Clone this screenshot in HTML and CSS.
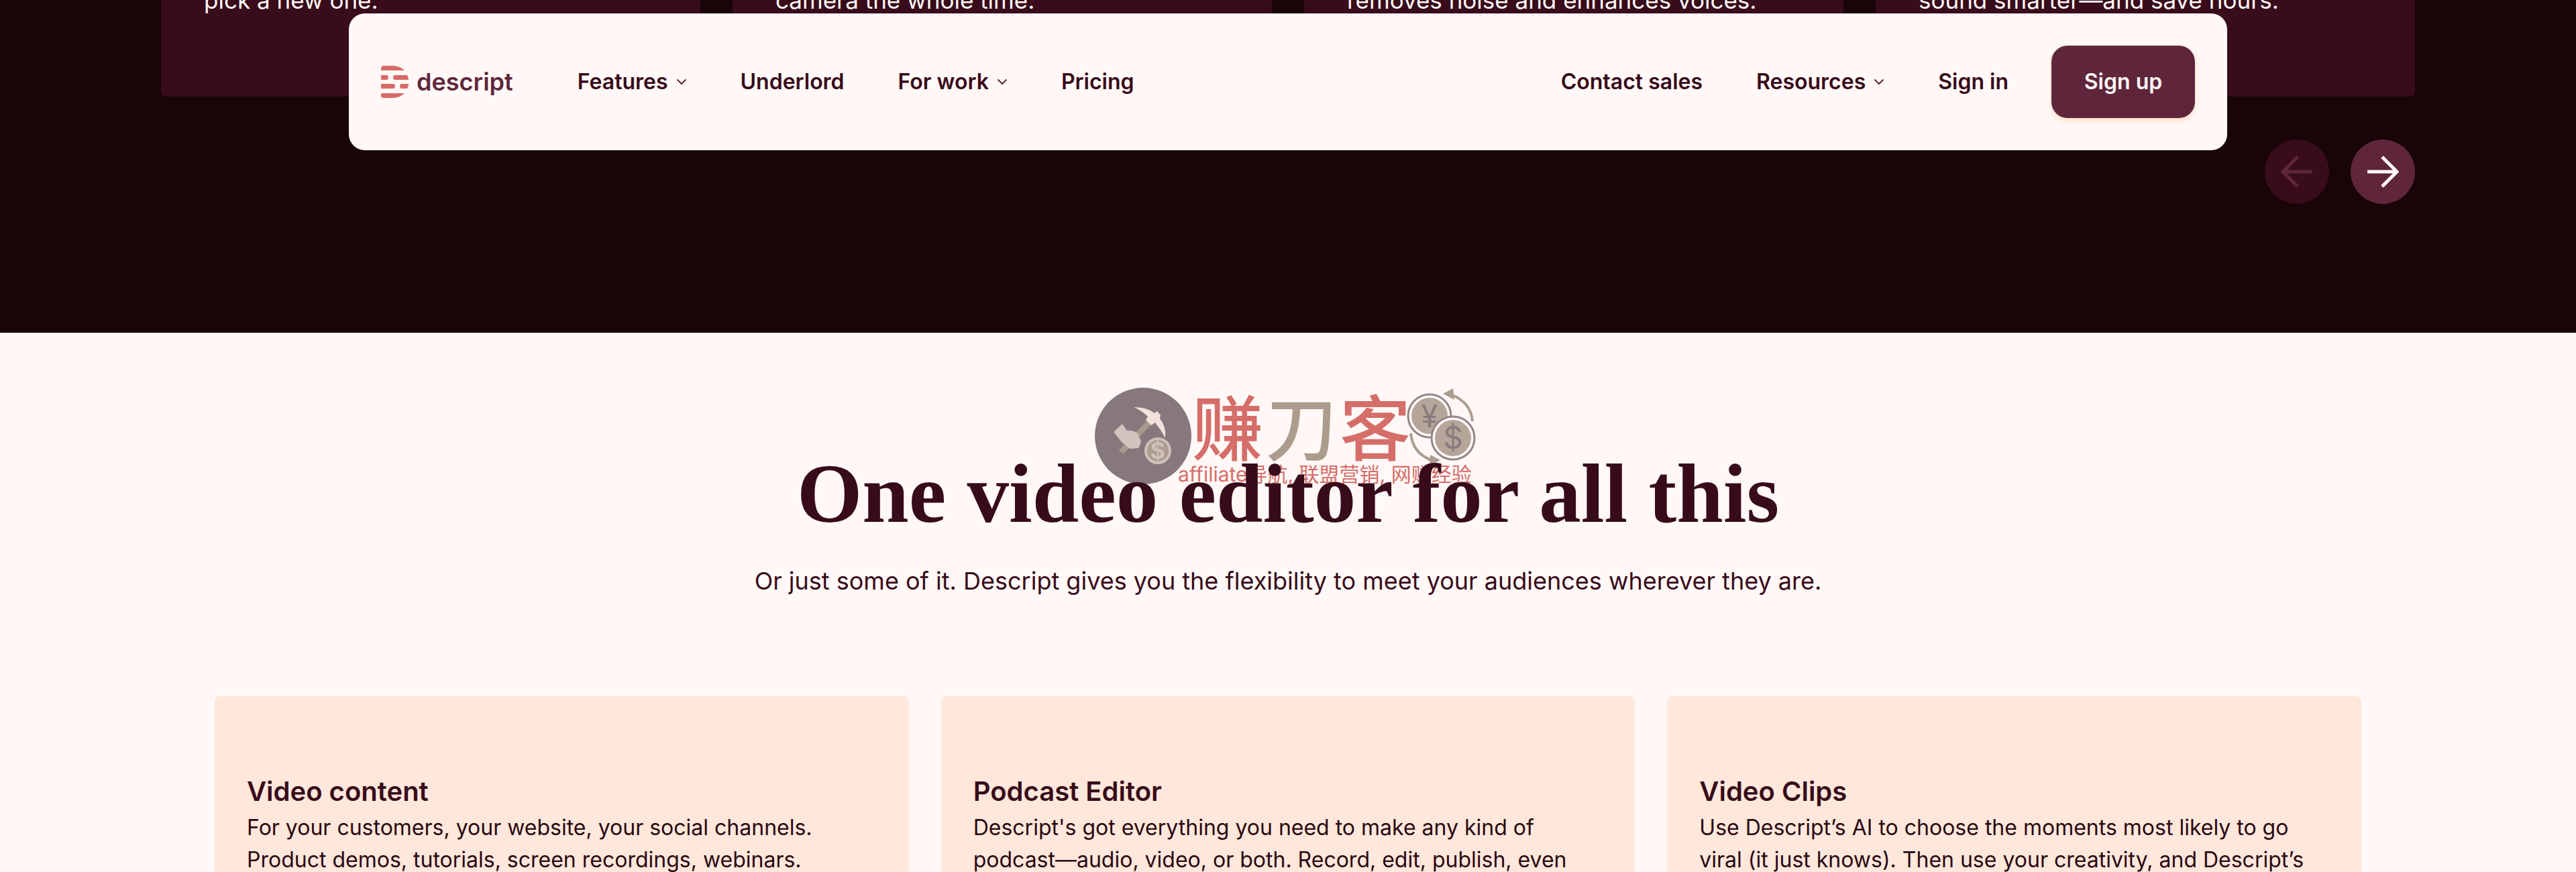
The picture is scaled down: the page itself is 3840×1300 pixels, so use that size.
FILE: index.html
```html
<!DOCTYPE html>
<html lang="en">
<head>
<meta charset="utf-8">
<title>Descript</title>
<link rel="stylesheet" href="styles.css">
</head>
<body>
<header class="site-header">
  <a class="logo" href="#">
    <svg class="logo-mark" viewBox="0 0 41 48" aria-hidden="true">
      <path d="M0 4Q0 0 4 0H17Q28 0 35 7H0Z"/>
      <path d="M0 14H8Q11 14 11 17.500T8 21H0Z"/>
      <path d="M21 14H39Q41 18 41 21H21Q18 21 18 17.500T21 14Z"/>
      <path d="M0 27H18Q21 27 21 30.500T18 34H0Z"/>
      <path d="M31 27H41Q41 31 39 34H31Q28 34 28 30.500T31 27Z"/>
      <path d="M0 41H35Q28 48 17 48H4Q0 48 0 44Z"/>
    </svg>
    <span class="logo-name">descript</span>
  </a>
  <nav class="nav nav-main" aria-label="Main">
    <a href="#">Features<svg class="chevron" viewBox="0 0 16 10" aria-hidden="true"><path d="M1.500 1.500L8 8L14.500 1.500"/></svg></a>
    <a href="#">Underlord</a>
    <a href="#">For work<svg class="chevron" viewBox="0 0 16 10" aria-hidden="true"><path d="M1.500 1.500L8 8L14.500 1.500"/></svg></a>
    <a href="#">Pricing</a>
  </nav>
  <nav class="nav nav-account" aria-label="Account">
    <a href="#">Contact sales</a>
    <a href="#">Resources<svg class="chevron" viewBox="0 0 16 10" aria-hidden="true"><path d="M1.500 1.500L8 8L14.500 1.500"/></svg></a>
    <a href="#">Sign in</a>
  </nav>
  <a class="signup" href="#">Sign up</a>
</header>
<main>
  <section class="tools">
    <div class="tool-cards">
      <article class="tool-card"><p>pick a new one.</p></article>
      <article class="tool-card"><p>camera the whole time.</p></article>
      <article class="tool-card"><p>removes noise and enhances voices.</p></article>
      <article class="tool-card"><p>sound smarter—and save hours.</p></article>
    </div>
    <div class="pager">
      <button class="pager-button" type="button" aria-label="Previous" disabled>
        <svg viewBox="0 0 48 48" aria-hidden="true"><path d="M47 24H4M25 2L3 24L25 46"/></svg>
      </button>
      <button class="pager-button" type="button" aria-label="Next">
        <svg viewBox="0 0 48 48" aria-hidden="true"><path d="M1 24H44M23 2L45 24L23 46"/></svg>
      </button>
    </div>
  </section>
  <section class="uses">
    <svg class="watermark" viewBox="1632 577 576 150" aria-hidden="true">
      <circle cx="1704" cy="650" r="72" fill="#87787d"/>
      <path d="M1714 629L1671 674" stroke="#a9988b" stroke-width="9"/>
      <path fill="#f3e2dc" d="M1690 607Q1710 607 1721 616L1725 613L1730 619L1729 624Q1739 637 1737 653Q1731 641 1722 630L1716 634L1708 626L1711 621Q1702 612 1690 607Z"/>
      <path fill="#d2c3be" d="M1660 644L1673 632L1680 642Q1690 641 1697 647L1697 651Q1702 655 1700 662L1697 668L1684 669L1672 659Z"/>
      <circle cx="1726" cy="672" r="18" fill="#ac9c90" stroke="#cfc0ba" stroke-width="4"/>
      <text x="1726" y="684" font-size="34" font-weight="700" fill="#cfc0ba" text-anchor="middle">$</text>
      <g class="watermark-name">
        <text x="1830" y="678" fill="#d56d69">赚</text>
        <text x="1940" y="678" fill="#ac9c8c">刀</text>
        <text x="2050" y="678" fill="#d56d69">客</text>
      </g>
      <text class="watermark-tag" x="1756" y="718">affiliate导航, 联盟营销, 网赚经验</text>
      <g fill="none" stroke="#ac9c90" stroke-width="4">
        <path d="M2195 628Q2193 601 2165 589"/>
        <path d="M2103 646Q2106 676 2134 686"/>
      </g>
      <path fill="#ac9c90" d="M2151 587L2166 579L2168 596ZM2147 686L2132 678L2131 695Z"/>
      <g fill="#b5a699">
        <circle cx="2131" cy="620" r="32" fill="#fff8f6" stroke="#95858a" stroke-width="3"/>
        <circle cx="2131" cy="620" r="27"/>
      </g>
      <text x="2131" y="637" font-size="46" fill="#8b7a7f" text-anchor="middle">¥</text>
      <circle cx="2166" cy="653" r="32" fill="#fff8f6" stroke="#95858a" stroke-width="3"/>
      <circle cx="2166" cy="653" r="27" fill="#b5a699"/>
      <text x="2166" y="669" font-size="46" fill="#8b7a7f" text-anchor="middle">$</text>
    </svg>
    <h2 class="uses-title">One video editor for all this</h2>
    <p class="uses-lead">Or just some of it. Descript gives you the flexibility to meet your audiences wherever they are.</p>
    <div class="use-cards">
      <article class="use-card">
        <h3>Video content</h3>
        <p>For your customers, your website, your social channels. Product demos, tutorials, screen recordings, webinars.</p>
      </article>
      <article class="use-card">
        <h3>Podcast Editor</h3>
        <p>Descript's got everything you need to make any kind of podcast—audio, video, or both. Record, edit, publish, even</p>
      </article>
      <article class="use-card">
        <h3>Video Clips</h3>
        <p>Use Descript’s AI to choose the moments most likely to go viral (it just knows). Then use your creativity, and Descript’s</p>
      </article>
    </div>
  </section>
</main>
</body>
</html>
```
FILE: styles.css
```css
* { box-sizing: border-box; }

body {
  margin: 0;
  height: 100vh;
  overflow: hidden;
  background: #fff8f6;
  color: #380b1a;
  font-family: Inter, "Noto Sans CJK SC", sans-serif;
  font-size: 32px;
  line-height: 48px;
}

h2, h3, p { margin: 0; }
a { color: inherit; text-decoration: none; }

.site-header {
  position: fixed;
  z-index: 10;
  top: 20px;
  left: 0;
  right: 0;
  width: calc(100% - 80px);
  max-width: 2800px;
  margin: 0 auto;
  padding: 48px;
  display: flex;
  align-items: center;
  background: #fff8f6;
  border-radius: 24px;
}

.logo {
  display: flex;
  align-items: center;
  gap: 12px;
  margin-right: 96px;
  color: #5f263b;
}
.logo-mark { width: 41px; height: 48px; fill: #d96b67; }
.logo-name { font-size: 36px; font-weight: 600; }

.nav {
  display: flex;
  gap: 80px;
  font-size: 32px;
  font-weight: 600;
  white-space: nowrap;
}
.nav a { display: flex; align-items: center; gap: 12px; }
.nav-account { margin-left: auto; margin-right: 64px; }

.chevron {
  width: 16px;
  height: 10px;
  fill: none;
  stroke: #5f263b;
  stroke-width: 2;
}

.signup {
  min-width: 214px;
  padding: 30px 48px;
  border-radius: 24px;
  background: #5f263b;
  color: #fff8f6;
  font-weight: 600;
  text-align: center;
  white-space: nowrap;
  box-shadow: 0 4px 8px #ffdcc8;
}

.tools {
  padding: 0 240px 192px;
  background: #190407;
}
.tool-cards {
  display: grid;
  grid-template-columns: repeat(4, 1fr);
  gap: 48px;
  margin-top: -28px;
}
.tool-card {
  padding: 0 64px 116px;
  border-radius: 8px;
  background: #380c1a;
  color: #fff8f6;
  font-size: 35px;
  line-height: 56px;
}

.pager {
  display: flex;
  justify-content: flex-end;
  gap: 32px;
  margin-top: 64px;
}
.pager-button {
  display: grid;
  place-items: center;
  width: 96px;
  height: 96px;
  padding: 0;
  border: 0;
  border-radius: 50%;
  background: #5f263b;
  color: #fff8f6;
}
.pager-button:disabled { background: #380c1a; color: #5f263b; }
.pager-button svg {
  width: 48px;
  height: 48px;
  fill: none;
  stroke: currentColor;
  stroke-width: 5;
}

.uses {
  position: relative;
  padding: 172px 320px 0;
}
.watermark {
  position: absolute;
  top: 81px;
  left: calc(50% - 288px);
  width: 576px;
  height: 150px;
}
.watermark-name {
  font-size: 106px;
  font-weight: 500;
  text-anchor: middle;
}
.watermark-tag { font-size: 30px; fill: #d56d69; }

.uses-title {
  position: relative;
  font-family: "Liberation Serif", serif;
  font-size: 125px;
  font-weight: 700;
  line-height: 136px;
  text-align: center;
}
.uses-lead {
  margin-top: 34px;
  font-size: 36px;
  line-height: 56px;
  text-align: center;
}

.use-cards {
  display: grid;
  grid-template-columns: repeat(3, 1fr);
  gap: 48px;
  margin-top: 144px;
}
.use-card {
  padding: 114px 48px;
  border-radius: 8px;
  background: #ffe7db;
}
.use-card h3 {
  margin-bottom: 2px;
  font-size: 40px;
  font-weight: 600;
  line-height: 56px;
}
.use-card p { color: #2a0812; }
```
